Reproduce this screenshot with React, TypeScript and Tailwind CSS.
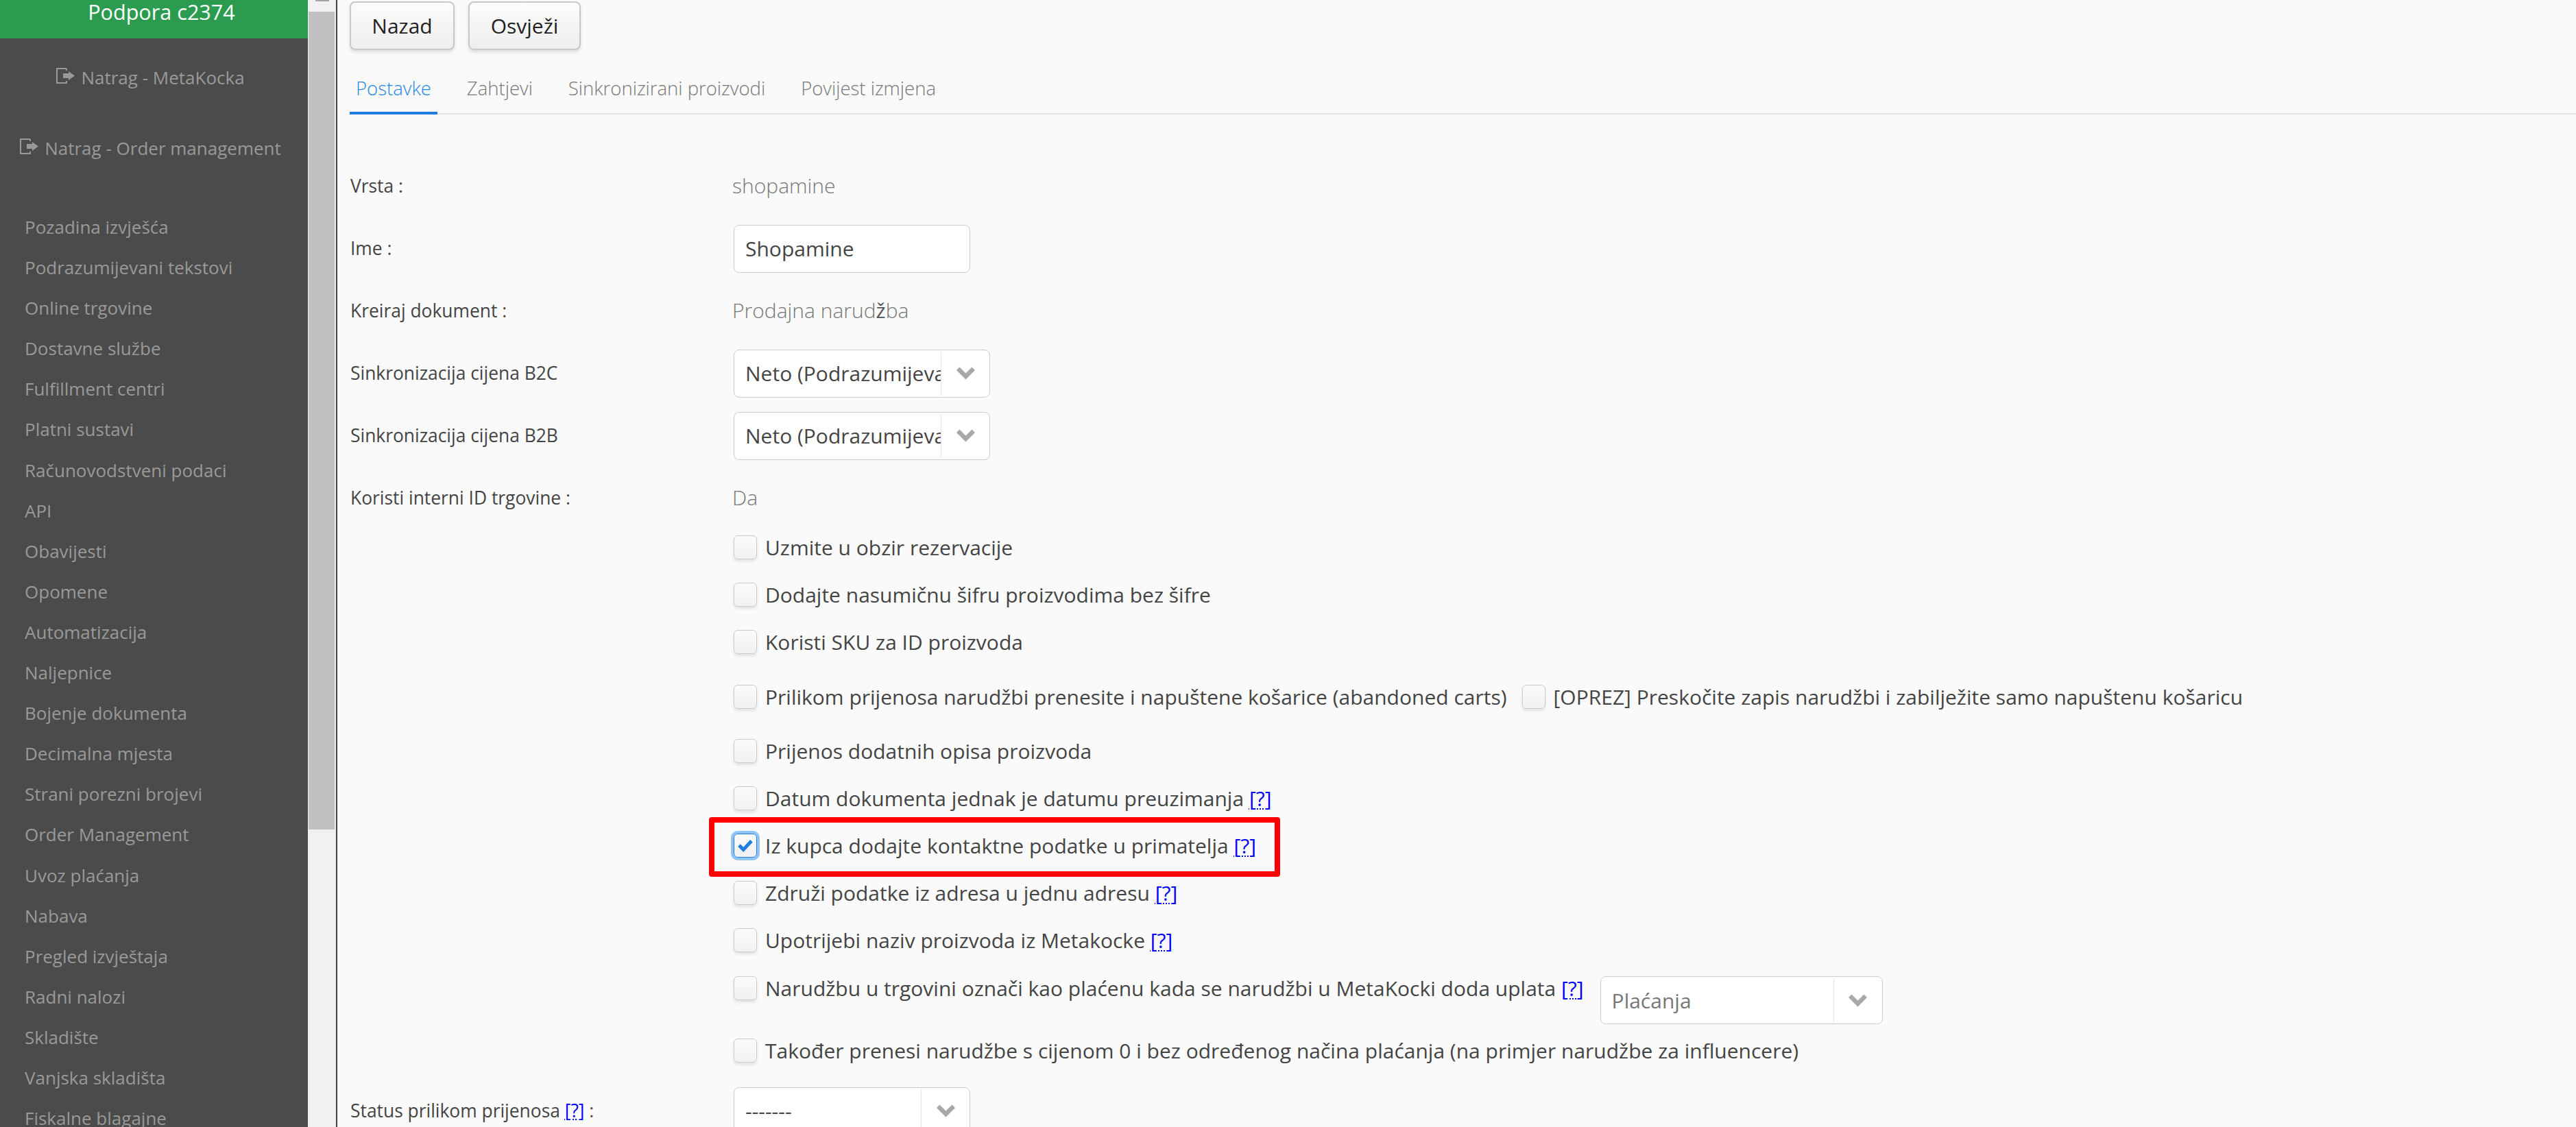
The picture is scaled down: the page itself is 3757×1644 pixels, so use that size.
import React from 'react';

const sideItems = [
  'Pozadina izvješća',
  'Podrazumijevani tekstovi',
  'Online trgovine',
  'Dostavne službe',
  'Fulfillment centri',
  'Platni sustavi',
  'Računovodstveni podaci',
  'API',
  'Obavijesti',
  'Opomene',
  'Automatizacija',
  'Naljepnice',
  'Bojenje dokumenta',
  'Decimalna mjesta',
  'Strani porezni brojevi',
  'Order Management',
  'Uvoz plaćanja',
  'Nabava',
  'Pregled izvještaja',
  'Radni nalozi',
  'Skladište',
  'Vanjska skladišta',
  'Fiskalne blagajne',
];

const tabs = ['Postavke', 'Zahtjevi', 'Sinkronizirani proizvodi', 'Povijest izmjena'];

const ExitIcon = () => (
  <svg viewBox="0 0 27 23" className="w-[27px] h-[23px] mr-[9px] mb-[5px] shrink-0" fill="none">
    <path d="M15 1H1v21h15M15 1v3M15 22v-3" stroke="#999" strokeWidth="2" />
    <path d="M10 8h8V5l9 6.5-9 6.5v-3h-8z" fill="#999" />
  </svg>
);

const Chevron = () => (
  <svg viewBox="0 0 27 19" className="w-[27px] h-[19px]" fill="#a8a8a8">
    <path d="M0 5L4.5.5l9 9 9-9L27 5 13.5 18.5z" />
  </svg>
);

const Help = () => <span className="text-[#0000ff] underline decoration-dotted decoration-[2px] underline-offset-[3px]">[?]</span>;

const Field = ({ label, children, h = 91 }: { label: React.ReactNode; children: React.ReactNode; h?: number }) => (
  <div className="flex items-center" style={{ height: h }}>
    <div className="w-[559px] text-[26.4px] text-[#444]">{label}</div>
    {children}
  </div>
);

const Value = ({ children }: { children: React.ReactNode }) => (
  <span className="text-[30px] text-[#777] font-light -ml-[2px] -mt-[2px]">{children}</span>
);

const Select = ({ value, w, muted }: { value: string; w: number; muted?: boolean }) => (
  <div className="flex h-[70px] bg-white border border-[#ccc] rounded-[8px] overflow-hidden" style={{ width: w }}>
    <div className={`flex-1 min-w-0 flex items-center pl-[16px] text-[30px] overflow-hidden whitespace-nowrap ${muted ? 'text-[#777]' : 'text-[#444]'}`}>{value}</div>
    <div className="w-[71px] shrink-0 my-[2px] border-l border-[#e5e5e5] flex items-center justify-center">
      <Chevron />
    </div>
  </div>
);

const Check = ({ on }: { on?: boolean }) => (
  <span className={`w-[34px] h-[35px] shrink-0 rounded-[6px] border bg-gradient-to-b from-[#fbfbfb] to-[#f1f1f1] flex items-center justify-center ${on ? 'border-[#1e7fe0] shadow-[0_0_0_4px_#90c4f5]' : 'border-[#ccc] shadow-[0_3px_4px_rgba(0,0,0,0.1)]'}`}>
    {on && (
      <svg viewBox="0 0 24 20" className="w-[22px] h-[18px]" fill="#1e7fe0">
        <path d="M0 11l4-4 5 5L20 0l4 4L9 20z" />
      </svg>
    )}
  </span>
);

const CheckRow = ({ children, h = 69, on }: { children: React.ReactNode; h?: number; on?: boolean }) => (
  <div className="flex items-center gap-[12px] pl-[559px] text-[30px] text-[#444] whitespace-nowrap" style={{ height: h }}>
    <Check on={on} />
    <span>{children}</span>
  </div>
);

const btn = 'h-[71px] rounded-[8px] border-2 border-[#c8c8c8] bg-gradient-to-b from-[#fcfcfc] to-[#eeeeee] text-[30px] text-[#222] shadow-[0_3px_5px_rgba(0,0,0,0.12)]';

export default function App() {
  return (
    <div className="font-['Open_Sans',sans-serif] flex h-[1644px] w-[3757px] overflow-hidden bg-[#fafafa]">
      {/* Sidebar */}
      <aside className="w-[449px] shrink-0 bg-[#4b4b4b] text-[#999] overflow-hidden">
        <div className="h-[56px] bg-[#2b9c4f] text-white text-[30.6px] text-center leading-[34px] pl-[22px]">Podpora c2374</div>
        <div className="flex items-center justify-center h-[114px] text-[26px] pr-[10px]">
          <ExitIcon />
          Natrag - MetaKocka
        </div>
        <div className="flex items-center justify-center h-[92px] text-[26px] pr-[10px]">
          <ExitIcon />
          Natrag - Order management
        </div>
        <ul className="pt-[40px] pl-[36px] text-[26px]">
          {sideItems.map((item) => (
            <li key={item} className="h-[59.1px] leading-[59px] whitespace-nowrap">{item}</li>
          ))}
        </ul>
      </aside>

      {/* Scrollbar */}
      <div className="w-[43px] shrink-0 bg-[#f1f1f1] border-r-2 border-[#444] flex flex-col items-center">
        <div className="h-[17px] w-full flex justify-center">
          <div className="w-[20px] h-[2px] bg-[#a3a3a3]" />
        </div>
        <div className="w-[38px] h-[1193px] bg-[#c1c1c1] mr-[1px]" />
      </div>

      {/* Main */}
      <main className="flex-1 min-w-0 pl-[18px]">
        <div className="flex gap-[20px] pt-[2px]">
          <button className={`${btn} w-[153px]`}>Nazad</button>
          <button className={`${btn} w-[164px]`}>Osvježi</button>
        </div>
        <div className="flex mt-[26px] border-b-2 border-[#e5e5e5] text-[27.5px] font-light text-[#777] h-[68px]">
          {tabs.map((t, i) => (
            <div key={t} className={`px-[9px] mr-[34px] h-[68px] leading-[60px] ${i === 0 ? 'text-[#1e88e5] border-b-4 border-[#1e7fe0]' : ''}`}>{t}</div>
          ))}
        </div>

        <div className="pt-[59px] pl-[1px]">
          <Field label="Vrsta :"><Value>shopamine</Value></Field>
          <Field label="Ime :">
            <div className="w-[345px] h-[70px] bg-white border border-[#ccc] rounded-[8px] flex items-center pl-[16px] text-[30px] text-[#444]">Shopamine</div>
          </Field>
          <Field label="Kreiraj dokument :"><Value>Prodajna narud<span className="font-normal text-[#555]">ž</span>ba</Value></Field>
          <Field label="Sinkronizacija cijena B2C"><Select value="Neto (Podrazumijevana)" w={374} /></Field>
          <Field label="Sinkronizacija cijena B2B"><Select value="Neto (Podrazumijevana)" w={374} /></Field>
          <div className="pt-[8px]">
            <Field label="Koristi interni ID trgovine :" h={75}><Value>Da</Value></Field>
          </div>

          <CheckRow>Uzmite u obzir rezervacije</CheckRow>
          <CheckRow>Dodajte nasumičnu šifru proizvodima bez šifre</CheckRow>
          <CheckRow>Koristi SKU za ID proizvoda</CheckRow>
          <div className="flex items-center pl-[559px] h-[90px] text-[30px] text-[#444] whitespace-nowrap gap-[12px]">
            <Check />
            <span className="mr-[10px]">Prilikom prijenosa narudžbi prenesite i napuštene košarice (abandoned carts)</span>
            <Check />
            <span>[OPREZ] Preskočite zapis narudžbi i zabilježite samo napuštenu košaricu</span>
          </div>
          <CheckRow>Prijenos dodatnih opisa proizvoda</CheckRow>
          <CheckRow>Datum dokumenta jednak je datumu preuzimanja <Help /></CheckRow>
          <div className="relative">
            <CheckRow on>Iz kupca dodajte kontaktne podatke u primatelja <Help /></CheckRow>
            <div className="absolute left-[523px] top-[-7px] w-[833px] h-[87px] border-[8px] border-[#ff0000] rounded-[4px]" />
          </div>
          <CheckRow>Združi podatke iz adresa u jednu adresu <Help /></CheckRow>
          <CheckRow>Upotrijebi naziv proizvoda iz Metakocke <Help /></CheckRow>
          <div className="flex items-start pl-[559px] pt-[18px] h-[92px] text-[30px] leading-[35px] text-[#444] whitespace-nowrap gap-[12px]">
            <Check />
            <span className="mr-[12px]">Narudžbu u trgovini označi kao plaćenu kada se narudžbi u MetaKocki doda uplata <Help /></span>
            <Select value="Plaćanja" w={412} muted />
          </div>
          <CheckRow>Također prenesi narudžbe s cijenom 0 i bez određenog načina plaćanja (na primjer narudžbe za influencere)</CheckRow>
          <div className="pt-[8px]">
            <Field label={<>Status prilikom prijenosa <Help /> :</>}><Select value="-------" w={345} /></Field>
          </div>
        </div>
      </main>
    </div>
  );
}
